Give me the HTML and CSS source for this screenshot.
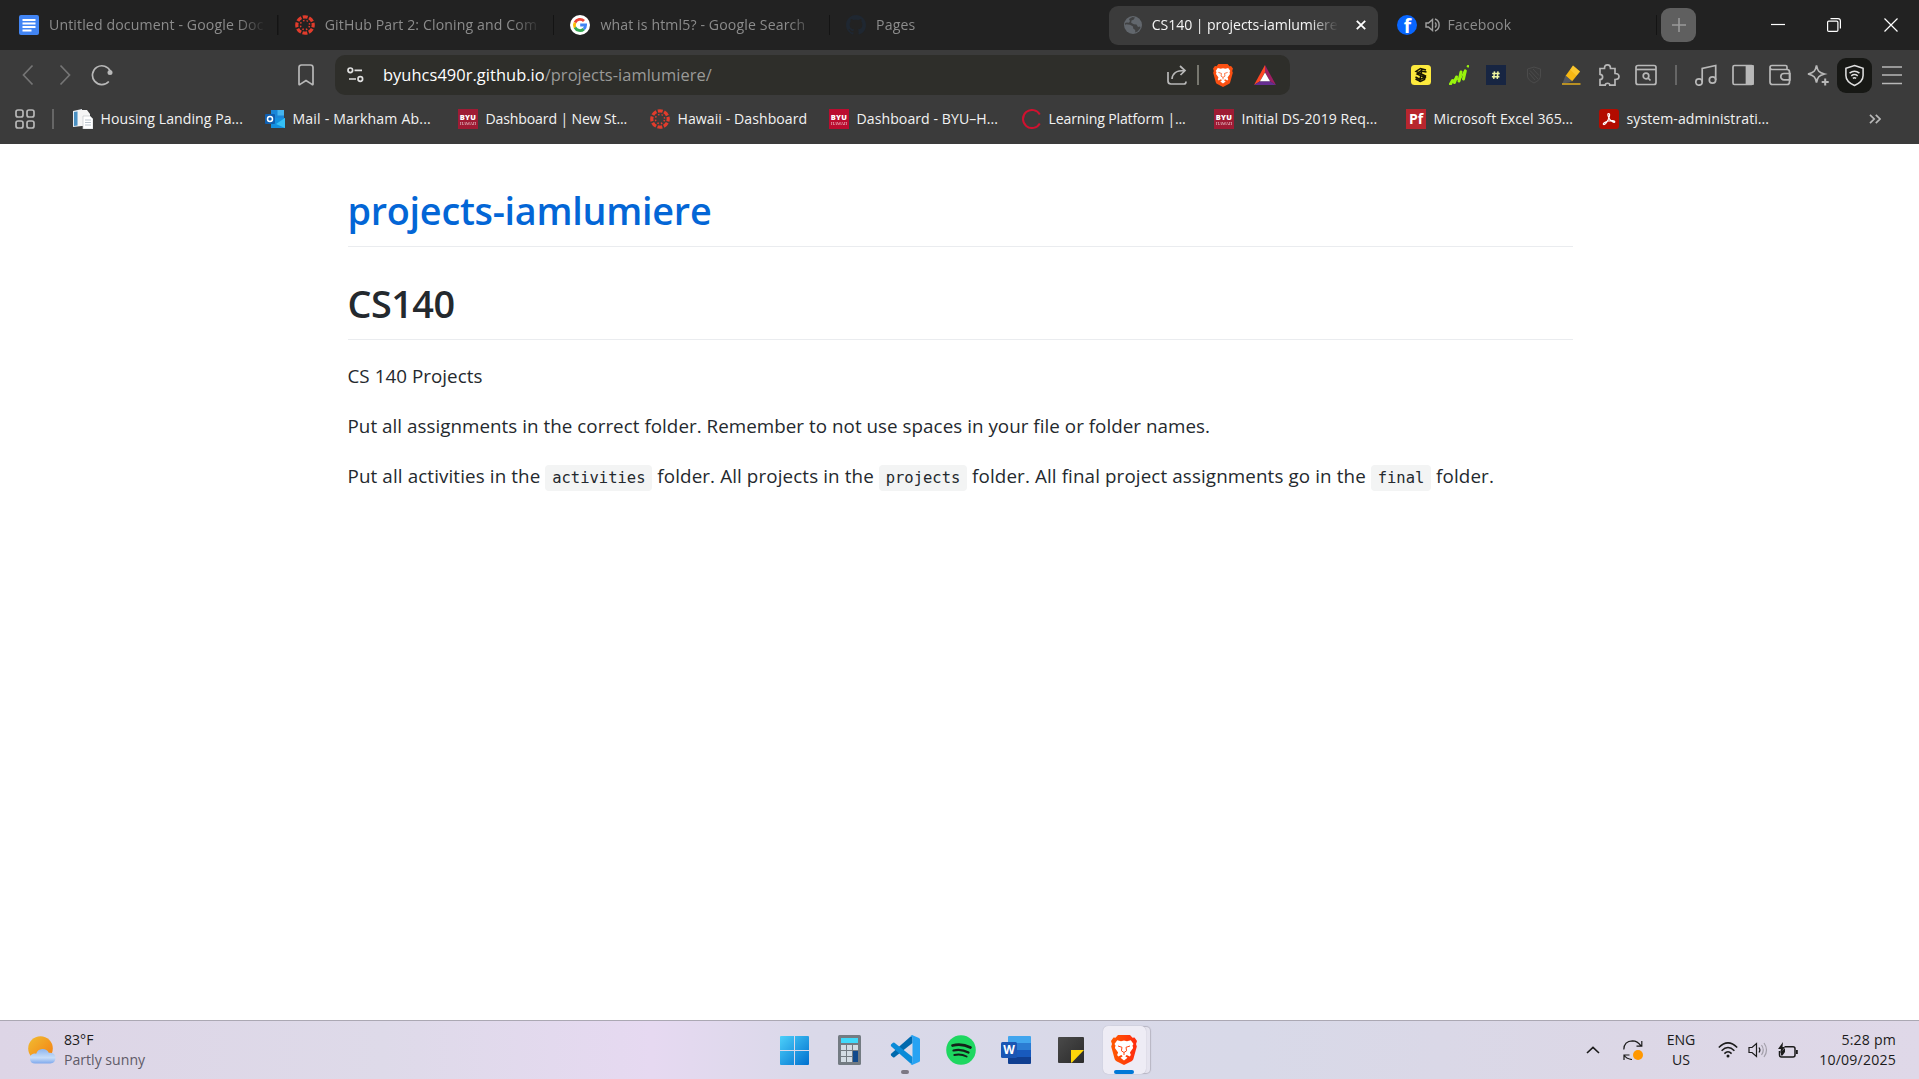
FILE: index.html
```
<!DOCTYPE html>
<html lang="en">
<head>
<meta charset="utf-8">
<title>CS140 | projects-iamlumiere</title>
<link rel="stylesheet" href="styles.css">
</head>
<body>
<svg class="defs" width="0" height="0" aria-hidden="true">
  <defs>
    <linearGradient id="winblue" x1="0" y1="0" x2="1" y2="1"><stop offset="0" stop-color="#4cd0fa"/><stop offset="1" stop-color="#0070cf"/></linearGradient>
    <linearGradient id="sun" x1="0" y1="0" x2="1" y2="1"><stop offset="0" stop-color="#f0bd32"/><stop offset="1" stop-color="#f57c10"/></linearGradient>
    <linearGradient id="cloud" x1="0" y1="0" x2="0" y2="1"><stop offset="0" stop-color="#8fb6ee"/><stop offset=".6" stop-color="#c8def9"/><stop offset="1" stop-color="#7fa8ec"/></linearGradient>
    <linearGradient id="braveg" x1="0" y1="0" x2="1" y2="0"><stop offset="0" stop-color="#ff5a00"/><stop offset="1" stop-color="#ff2a10"/></linearGradient>
    <linearGradient id="note" x1="0" y1="0" x2="1" y2="1"><stop offset="0" stop-color="#4a4a4a"/><stop offset="1" stop-color="#2b2b2b"/></linearGradient>
    <symbol id="canvas" viewBox="0 0 20 20">
      <circle cx="10" cy="10" r="8.2" fill="none" stroke="#e23c2c" stroke-width="3.2" stroke-dasharray="4.9 1.54" stroke-dashoffset="2.45"/>
      <circle cx="10" cy="10" r="4.6" fill="none" stroke="#e23c2c" stroke-width="1.5" stroke-dasharray="1.5 2.11" stroke-dashoffset="-1.05"/>
    </symbol>
    <symbol id="lion" viewBox="0 0 26 30">
      <path d="M7 0h12l2.5 2.8 2-.3L26 6l-1 3 .8 2.500-3.300 12c-.4 1.400-1 2-2 2.700L13 30l-7.500-3.800c-1-.7-1.600-1.300-2-2.700L.2 11.500 1 9 0 6l2.500-3.500 2 .3z"/>
      <path fill="#fff" d="M13 5.500l3 .7 3.800-.9 2.700 3.700-1 1.500.6 2.500-3.200 4.500 1 2.500-1.200 1.500-3-1.500-1.400 1.300 2.200 1.500L13 25.500l-3.500-2.700 2.200-1.500-1.400-1.300-3 1.500L6.100 20l1-2.500L3.900 13l.6-2.500-1-1.500 2.700-3.700 3.800.9z"/>
      <path fill="none" stroke="currentColor" stroke-width="1" d="M7 11l4 1.300-.6 3.500 2.600 1.700 2.600-1.700-.6-3.500 4-1.300M13 17.500v2.500"/>
    </symbol>
  </defs>
</svg>

<header class="browser">
  <div class="tabstrip">
    <div class="tab">
      <svg class="fav" viewBox="0 0 20 20"><rect width="20" height="20" rx="2" fill="#4285f4"/><path d="M3.500 5h13M3.500 8.500h13M3.500 12h13M3.500 15.500h9" stroke="#fff" stroke-width="2"/></svg>
      <span class="title">Untitled document - Google Doc</span>
    </div>
    <div class="tab"><svg class="fav"><use href="#canvas"/></svg><span class="title">GitHub Part 2: Cloning and Com</span></div>
    <div class="tab">
      <svg class="fav" viewBox="0 0 20 20"><circle cx="10" cy="10" r="10" fill="#fff"/><g fill="none" stroke-width="2.800"><path d="M5 7.500A5.600 5.600 0 0 1 14 6.100" stroke="#ea4335"/><path d="M5 12.500A5.600 5.600 0 0 1 5 7.500" stroke="#fbbc05"/><path d="M13.800 14.100A5.600 5.600 0 0 1 5 12.500" stroke="#34a853"/><path d="M10.200 10h5.400A5.600 5.600 0 0 1 13.800 14.100" stroke="#4285f4"/></g></svg>
      <span class="title">what is html5? - Google Search</span>
    </div>
    <div class="tab">
      <svg class="fav" viewBox="0 0 16 16"><path fill="#1f2731" d="M8 0C3.580 0 0 3.580 0 8c0 3.540 2.290 6.530 5.470 7.590.4.070.55-.17.550-.38 0-.19-.01-.82-.01-1.490-2.010.37-2.530-.49-2.690-.94-.09-.23-.48-.94-.82-1.130-.28-.15-.68-.52-.01-.53.63-.01 1.080.58 1.230.82.720 1.210 1.870.87 2.330.66.070-.52.280-.87.510-1.070-1.780-.2-3.640-.89-3.640-3.950 0-.87.310-1.590.82-2.150-.08-.2-.36-1.020.080-2.120 0 0 .67-.21 2.200.82.640-.18 1.320-.27 2-.27s1.360.090 2 .27c1.530-1.040 2.200-.82 2.200-.82.440 1.100.160 1.920.080 2.120.510.56.820 1.270.820 2.150 0 3.070-1.870 3.750-3.650 3.950.29.250.54.730.54 1.480 0 1.070-.01 1.930-.01 2.200 0 .21.150.46.550.38A8.010 8.010 0 0 0 16 8c0-4.420-3.580-8-8-8z"/></svg>
      <span class="title">Pages</span>
    </div>
    <div class="tab active">
      <svg class="fav" viewBox="0 0 20 20"><circle cx="10" cy="10" r="9" fill="#62676d"/><path fill="#3b3b3b" d="M12 2.500l-1.500 2.300-2 .7-.3 2.200 2.600 1.500 2.700.3 1.500 2.500 2-.5.500 1.500-3 3.500-2.300 1v-2.500l-2-1.500-.2-2L7 9.800l-4-.5-.8 1L2 8l2-.5 2 .3 1-1.800-1-2L9.500 2z" opacity=".85"/></svg>
      <span class="title">CS140 | projects-iamlumiere</span>
      <svg class="tab-close" viewBox="0 0 10 10"><path d="M.8.8l8.400 8.400M9.200.8L.8 9.200" stroke="#fff" stroke-width="1.800"/></svg>
    </div>
    <div class="tab">
      <span class="fav fb">f</span>
      <svg class="speaker" viewBox="0 0 16 14" fill="none" stroke="#a0a0a0" stroke-width="1.400"><path d="M1 5h2.500L7.500 1.500v11L3.500 9H1z"/><path d="M10 4.500c1.500 1.200 1.500 3.800 0 5M10 1c5.500 2 5.500 10 0 12"/></svg>
      <span class="title">Facebook</span>
    </div>
    <div class="newtab"><svg width="14" height="14" viewBox="0 0 14 14"><path d="M7 0v14M0 7h14" stroke="#9a9a9a" stroke-width="1.600"/></svg></div>
    <div class="window-buttons">
      <svg width="14" height="14" viewBox="0 0 14 14"><path d="M0 6.500h14" stroke="#fff" stroke-width="1.200"/></svg>
      <svg width="14" height="14" viewBox="0 0 14 14" fill="none" stroke="#fff" stroke-width="1.200"><rect x=".6" y="3.100" width="10.300" height="10.300" rx="1.200"/><path d="M3.500 .7h7.500q2.400 0 2.400 2.400v7.500"/></svg>
      <svg width="14" height="14" viewBox="0 0 14 14"><path d="M.5.5l13 13M13.500.5l-13 13" stroke="#fff" stroke-width="1.200"/></svg>
    </div>
  </div>

  <div class="toolbar">
    <div class="nav">
      <svg viewBox="0 0 22 22"><path d="M15.500 1.500L6.500 11l9 9.500" stroke="#757575"/></svg>
      <svg viewBox="0 0 22 22"><path d="M6.500 1.500l9 9.500-9 9.500" stroke="#757575"/></svg>
      <svg viewBox="0 0 22 22"><path d="M17.800 17.500A9.400 9.400 0 1 1 19.500 7.500"/><circle cx="19" cy="8.500" r="2.500" fill="#b8b8b8" stroke="none"/></svg>
    </div>
    <svg class="bookmark" viewBox="0 0 16 22"><path d="M1 3.500Q1 1 3.500 1h9Q15 1 15 3.500V20q0 1-1 .4L8 16.500l-6 3.900q-1 .6-1-.4z"/></svg>
    <div class="urlbar">
      <svg class="tune" viewBox="0 0 17 16"><g fill="none" stroke="#e0e0e0" stroke-width="1.700"><circle cx="3.300" cy="3.300" r="2.300"/><path d="M7.500 3.300H15M2 12h7"/><circle cx="13.300" cy="12" r="2.300"/></g></svg>
      <div class="url"><span class="host">byuhcs490r.github.io</span><span class="path">/projects-iamlumiere/</span></div>
      <svg class="share" viewBox="0 0 20 20"><path d="M1 7v9q0 3 3 3h13q2 0 2-2.500M5 14C5.500 8 9 5.500 17.500 5.500M13 1l5 4.500L13.500 10"/></svg>
      <i class="sep"></i>
      <svg class="shield" viewBox="0 0 26 30" fill="#fb5012" color="#fb5012"><use href="#lion"/></svg>
      <svg class="bat" viewBox="0 0 22 20"><path d="M11 0L0 20l6-3.800L11 7z" fill="#ff4724"/><path d="M11 0l11 20-6-3.800L11 7z" fill="#9e1f63"/><path d="M0 20h22l-6-3.800H6z" fill="#662d91"/><path d="M11 7.500l5 8.700H6z" fill="#fff"/></svg>
    </div>
    <div class="extensions">
      <svg viewBox="0 0 20 20"><rect width="20" height="20" rx="3.500" fill="#fdea3d"/><path d="M15 5L9.500 3.500 5 6.500l9.500 4.500-1 3.500-4 2-5-2.500M15.500 7l-6-1L6 9l8 3.500-5 2-4.500-2.500M11 3.500L8.500 17" stroke="#171400" stroke-width="1.500" fill="none"/></svg>
      <svg viewBox="0 0 20 20" stroke="#98f40c" stroke-linecap="round" fill="none"><path d="M1.500 19l2-3.500M5.500 17.500l2-5.500M10 16l2-9M14.500 14l1.800-8" stroke-width="3"/><path d="M19 1.200v.1" stroke-width="2.500"/><path d="M1 19l6-6 3.500 2.500L16 5" stroke-width="1.400"/></svg>
      <svg viewBox="0 0 20 20"><rect width="20" height="20" fill="#172542"/><path d="M8.500 6.300l-.8 7.500M12 6.300l-.8 7.500M6.200 8.500h7.500M5.900 11.700h7.500" stroke="#eef4a0" stroke-width="1.500"/></svg>
      <svg viewBox="0 0 20 20" fill="none" stroke="#4b4b4b"><path d="M10 2l6.500 2v7q0 4-6.500 7-6.500-3-6.500-7V4z"/><path d="M6 5.500l8 8.500M9 4l6 6.500M5 8l6 7"/></svg>
      <svg viewBox="0 0 20 20"><path d="M12 .5l7 6-8 10-6.500-5.500z" fill="#f6b813"/><path d="M12 .5l7 6-3.500 4.300-6.300-6z" fill="#ffd54a" opacity=".5"/><path d="M4.500 10.500l6.500 5.500-3 1.500-6.500 1z" fill="#55585e"/><path d="M1 19h18.500" stroke="#efb61a" stroke-width="1.400"/></svg>
      <svg class="line" viewBox="0 0 22 22"><path d="M2 4.500h4.500C6.500 2 7.500.9 9.500.9s3 1.100 3 3.600H17v5c3 0 4 1 4 3s-1 3-4 3v5.600h-5.200c0-2.500-4.600-2.500-4.600 0H2v-5.500c3.500-.3 3.500-5 0-5.300z"/></svg>
      <svg class="line" viewBox="0 0 22 22"><rect x="1" y="1.500" width="20" height="19" rx="2"/><path d="M1 5.500h20"/><circle cx="11" cy="12" r="2.800"/><path d="M13 14l2.500 2.500"/></svg>
      <i class="sep dim"></i>
      <svg class="line" viewBox="0 0 22 22"><circle cx="4" cy="18" r="3.200"/><circle cx="17.500" cy="16" r="3.200"/><path d="M7.200 18V4.500l13.500-3V16"/></svg>
      <svg class="line" viewBox="0 0 22 22"><rect x="1" y="1.500" width="20" height="19" rx="1.500"/><path d="M14.500 2h6.500v18h-6.500z" fill="#b8b8b8"/></svg>
      <svg class="line" viewBox="0 0 22 22"><path d="M18 5.500V3q0-1.500-1.500-1.500H3Q1 1.500 1 3.500V18q0 2.500 2.500 2.500H18q2.500 0 2.500-2.500V8q0-2.500-2.500-2.500H3q-2 0-2-2M21 9.500h-6a3.200 3.200 0 0 0 0 6.400h6z"/></svg>
      <svg class="line" viewBox="0 0 22 22"><path d="M9.500 1.500c1 5.500 2.500 7 8 8.500-5.500 1.500-7 3-8 8.500-1-5.500-2.500-7-8.500-8.500 6-1.500 7.500-3 8.500-8.500z"/><path d="M18.200 14.500v7M14.700 18h7" stroke-width="2"/></svg>
      <span class="vpn"><svg viewBox="0 0 22 24"><path d="M11 1.500l9 3V12q0 6.500-9 10.500Q2 18.500 2 12V4.500z"/><path d="M5.800 9.500q5.200-4 10.400 0M7.600 12.300q3.400-2.600 6.800 0M9.300 15q1.700-1.300 3.400 0"/></svg></span>
      <svg class="line" viewBox="0 0 22 22"><path d="M1 3h20M1 11h20M1 19.500h20"/></svg>
    </div>
  </div>

  <div class="bookmarks">
    <svg class="grid-icon" viewBox="0 0 20 20"><rect x="1" y="1" width="7" height="7" rx="2"/><rect x="12" y="1" width="7" height="7" rx="2"/><rect x="1" y="12" width="7" height="7" rx="2"/><rect x="12" y="12" width="7" height="7" rx="2"/></svg>
    <i class="sep dim"></i>
    <a><svg class="fav" viewBox="0 0 20 20"><path d="M0 2l9-2v17l-9 1z" fill="#e8eef4"/><path d="M1 3l3.500-.6v14L1 17z" fill="#4a90c2"/><path d="M5 1h9l3 4v12H5z" fill="#f5f5f5"/><path d="M10 7h7l3 3v10H10z" fill="#fff" stroke="#c4c8cc" stroke-width=".7"/><path d="M12 11h6M12 13.500h6M12 16h6" stroke="#b9c3cc"/></svg><span>Housing Landing Pa...</span></a>
    <a class="wide"><svg class="fav" viewBox="0 0 20 20"><path d="M6 1h13v11H6z" fill="#1a86d8"/><path d="M12.500 1H19v5.500h-6.500z" fill="#45b4ee"/><path d="M6 9l14 0v10H6z" fill="#1490df"/><path d="M20 9l-9 6 9 4z" fill="#35c0f5"/><rect y="5" width="10" height="10" rx="1" fill="#0f5fb0"/><circle cx="5" cy="10" r="2.500" fill="none" stroke="#fff" stroke-width="1.500"/></svg><span>Mail - Markham Ab...</span></a>
    <a class="narrow"><span class="fav byu muted">BYU<small>HAWAII</small></span><span>Dashboard | New St...</span></a>
    <a><svg class="fav"><use href="#canvas"/></svg><span>Hawaii - Dashboard</span></a>
    <a><span class="fav byu">BYU<small>HAWAII</small></span><span>Dashboard - BYU–H...</span></a>
    <a class="narrow"><svg class="fav" viewBox="0 0 20 20"><path d="M18.800 5.500A9 9 0 1 0 18.800 14.500" fill="none" stroke="#d0112f" stroke-width="2"/></svg><span>Learning Platform |...</span></a>
    <a><span class="fav byu muted">BYU<small>HAWAII</small></span><span>Initial DS-2019 Req...</span></a>
    <a><span class="fav pf">Pf</span><span>Microsoft Excel 365...</span></a>
    <a><svg class="fav" viewBox="0 0 20 20"><rect width="20" height="20" rx="3" fill="#b30b00"/><path d="M9.500 4.500c2 0 .8 3.500-.3 6-1.200 2.500-3.200 5.300-4.500 5-1.500-.5 1.500-2.900 4.600-3.500 3-.7 6.700-.6 6.500.9-.3 1.400-4-.6-5.400-3C9 7.500 8.300 4.500 9.500 4.500z" fill="none" stroke="#fff" stroke-width="1.200"/></svg><span>system-administrati...</span></a>
    <svg class="more" viewBox="0 0 12 10"><path d="M1 .8L5.200 5 1 9.200M6.800.8L11 5 6.800 9.200"/></svg>
  </div>
</header>

<main class="page">
  <h1><a>projects-iamlumiere</a></h1>
  <h1>CS140</h1>
  <p>CS 140 Projects</p>
  <p>Put all assignments in the correct folder. Remember to not use spaces in your file or folder names.</p>
  <p class="folders">Put all activities in the <code>activities</code> folder. All projects in the <code>projects</code> folder. All final project assignments go in the <code>final</code> folder.</p>
</main>

<footer class="taskbar">
  <div class="weather">
    <svg width="28" height="28" viewBox="0 0 28 28"><circle cx="12.500" cy="12.500" r="12.300" fill="url(#sun)"/><path d="M7 27.500a5 5 0 0 1-1-9.900q1.200-.3 2.200.1a6.900 6.900 0 0 1 12.600-1q6.500-.4 6.700 5.400-.2 5.300-5.200 5.400z" fill="url(#cloud)"/></svg>
    <div><b>83°F</b><span>Partly sunny</span></div>
  </div>
  <div class="apps">
    <div><svg width="29" height="29" viewBox="0 0 29 29" fill="url(#winblue)"><path d="M1 0h13v14H0V1q0-1 1-1zM15 0h13q1 0 1 1v13H15zM0 15h14v14H1q-1 0-1-1zM15 15h14v13q0 1-1 1H15z"/></svg></div>
    <div><svg width="23" height="30" viewBox="0 0 23 30"><rect width="23" height="30" rx="1.500" fill="#737b82"/><rect x="3" y="3" width="17" height="5" fill="#40d9fa"/><g fill="#d3dce4"><path d="M3 10h5v5H3zM9 10h5v5H9zM15 10h5v5h-5zM3 16h5v5H3zM9 16h5v5H9zM3 22h5v5H3zM9 22h5v5H9z"/></g><path d="M15 16h5v11h-5z" fill="#124a8c"/></svg></div>
    <div class="open"><svg width="30" height="30" viewBox="0 0 30 30"><path d="M1 20.500l2 1.700q.8.400 1.500 0L22.500 8V.5L20 2 .8 19z" fill="#0069ad"/><path d="M1 9.500l2-1.700q.8-.4 1.500 0L22.500 22v7.500L20 28 .8 11z" fill="#0a8bd8"/><path d="M22 0l7 3q1 .5 1 1.500v21q0 1-1 1.500l-7 3-1.500-1 2-1.500v-25l-2-1.500z" fill="#27a3f3"/></svg></div>
    <div><svg width="30" height="30" viewBox="0 0 30 30" fill="none" stroke="#14221a" stroke-linecap="round"><circle cx="15" cy="15" r="14.800" fill="#1ed760" stroke="none"/><path d="M6.500 10.500q9-2.500 18 2" stroke-width="2.700"/><path d="M7.500 15.500q7.500-2 15 2" stroke-width="2.200"/><path d="M8.300 20q6.500-1.500 12.300 1.500" stroke-width="1.900"/></svg></div>
    <div><svg width="30" height="28" viewBox="0 0 30 28"><path d="M7 1q0-1 1-1h21q1 0 1 1v6H7z" fill="#41a5ee"/><path d="M7 7h23v7H7z" fill="#2b7cd3"/><path d="M7 14h23v7H7z" fill="#185abd"/><path d="M7 21h23v6q0 1-1 1H8q-1 0-1-1z" fill="#103f91"/><rect y="6" width="16" height="16" rx="1.500" fill="#1a56b4"/><text x="8" y="18" text-anchor="middle" class="word-letter">W</text></svg></div>
    <div><svg width="26" height="26" viewBox="0 0 26 26"><rect width="26" height="26" rx="1" fill="url(#note)"/><path d="M13 13h13L14 25.500q-1 .5-1-.5z" fill="#ffd60a"/></svg></div>
    <div class="current"><svg width="26" height="30" viewBox="0 0 26 30" fill="url(#braveg)" color="#ff4412"><use href="#lion"/></svg></div>
  </div>
  <div class="tray">
    <svg width="14" height="8" viewBox="0 0 14 8"><path d="M1 7l6-5.700L13 7" stroke-width="1.600"/></svg>
    <svg width="20" height="20" viewBox="0 0 20 20"><path d="M.8 9.500Q1 1 9.500.8q5 0 8.500 5M18.800 1v5.200h-5.300M1 20v-5h5.500M1 15q2.500 4 8 4.500" stroke-width="1.200"/><circle cx="15" cy="15" r="5" fill="#ff9800" stroke="none"/></svg>
    <div class="lang">ENG<br>US</div>
    <svg width="20" height="16" viewBox="0 0 20 16" stroke-width="1.500"><path d="M.8 5.500q9.200-9.200 18.400 0M3.600 8.700q6.400-6.400 12.800 0M6.400 11.600q3.600-3.600 7.200 0"/><circle cx="10" cy="14" r="1.500" fill="#1b1b1b" stroke="none"/></svg>
    <svg width="20" height="16" viewBox="0 0 20 16" stroke-width="1.200"><path d="M1 5.500h3L8.500 1.500v13L4 10.500H1z"/><path d="M11 5.500q1.800 2.500 0 5"/><path d="M13.500 3q3.500 5 0 10M16 1q5 7 0 14" opacity=".3"/></svg>
    <svg width="20" height="17" viewBox="0 0 20 17"><path d="M6.500 4.700H15q2 0 2 2V13q0 2-2 2H3.500q-2 0-2-2V9" stroke-width="1.500"/><path d="M18 8h1.800v4H18zM5 0L0 7h3L2 11.500 7 5H4.500zM3 13.500V10l4-4v4l-2.500 3.500z" fill="#1b1b1b" stroke="none"/></svg>
    <div class="clock">5:28 pm<br>10/09/2025</div>
  </div>
</footer>
</body>
</html>
```
FILE: styles.css
```
* { box-sizing: border-box; }
body {
  margin: 0;
  width: 1919px;
  height: 1079px;
  display: flex;
  flex-direction: column;
  overflow: hidden;
  background: #fff;
  font-family: "Open Sans", "Noto Sans", sans-serif;
  font-size: 14.1px;
}
svg { display: block; flex: none; }
.defs { position: absolute; }
.fav { width: 20px; height: 20px; flex: none; }

/* Tabs */
.browser { background: #3b3b3b; height: 144px; }
.tabstrip {
  display: grid;
  grid-template-columns: repeat(6, 275.7px) 1fr 170px;
  height: 50px;
  padding-left: 3px;
  background: #222;
  align-items: center;
}
.tab {
  display: flex;
  align-items: center;
  height: 39px;
  padding: 0 13px 0 16px;
  color: #8c8c8c;
  letter-spacing: .13px;
  background: linear-gradient(#141414, #141414) right center / 1.500px 20px no-repeat;
}
.tab .title {
  flex: 1;
  margin-left: 10px;
  padding-bottom: 2px;
  white-space: nowrap;
  mask-image: linear-gradient(to right, #000 calc(100% - 28px), transparent);
}
.tab:has(+ .active) { background: none; }
.tab.active {
  margin: 0 3px;
  padding: 0 15px 0 14px;
  border-radius: 9px;
  background: #3b3b3b;
  color: #f4f4f4;
  letter-spacing: -.08px;
}
.tab.active .title { margin-left: 9px; }
.tab-close { width: 10px; height: 10px; margin: 0 0 0 18px; }
.fb {
  border-radius: 50%;
  background: #0866ff;
  color: #fff;
  font: 700 19px/22px "Open Sans", sans-serif;
  text-align: center;
}
.speaker { width: 16px; height: 14px; margin-left: 8px; }
.tab .speaker + .title { margin-left: 6px; }
.newtab {
  display: grid;
  place-items: center;
  width: 35px;
  height: 34px;
  margin-left: 4px;
  border-radius: 9px;
  background: #5f5f5f;
}
.window-buttons { display: flex; gap: 42.500px; padding-left: 21.500px; }

/* Toolbar */
.toolbar { display: flex; align-items: center; height: 50px; }
.nav { display: flex; gap: 15px; width: 298px; padding-left: 17px; }
.nav svg { width: 22px; height: 22px; }
.nav svg, .bookmark, .share, .line, .vpn svg, .grid-icon, .more {
  fill: none;
  stroke: #b8b8b8;
  stroke-width: 1.700;
}
.bookmark { width: 16px; height: 22px; }
.urlbar {
  display: flex;
  align-items: center;
  width: 955px;
  height: 40px;
  margin-left: 21px;
  padding: 0 14px 0 12px;
  border-radius: 10px;
  background: #2e2e2a;
}
.tune { width: 17px; height: 16px; }
.url { flex: 1; margin-left: 19px; padding-bottom: 2px; font-size: 16.450px; letter-spacing: .04px; }
.host { color: #fff; }
.path { color: #9a9a98; }
.share { width: 20px; height: 20px; }
.sep { display: block; width: 2px; height: 20px; background: #77776f; }
.sep.dim { background: #666; }
.urlbar .sep { margin-left: 10px; }
.shield { width: 20px; height: 23px; margin-left: 14px; }
.bat { width: 22px; height: 20px; margin-left: 21px; }
.extensions {
  display: grid;
  grid-template-columns: repeat(7, 37.500px) 22px repeat(6, 37.300px);
  align-items: center;
  justify-items: center;
  margin-left: 112.500px;
}
.extensions > svg { width: 20px; height: 20px; }
.extensions > svg.line { width: 22px; height: 22px; }
.vpn {
  display: grid;
  place-items: center;
  width: 35px;
  height: 35px;
  border-radius: 9px;
  background: #171815;
}
.vpn svg { width: 21px; height: 23px; stroke: #e0e0e0; stroke-width: 1.600; }

/* Bookmarks */
.bookmarks {
  display: grid;
  grid-template-columns: 37px 21px 192px 193px 192px 179px 192px 193px 192px 193px 1fr 12px;
  align-items: center;
  height: 38px;
  padding: 0 38px 0 15px;
  color: #f2f2f2;
}
.bookmarks a { display: flex; align-items: center; gap: 7.500px; white-space: nowrap; letter-spacing: .06px; }
.bookmarks a > span:last-child { padding-bottom: 2px; }
.bookmarks a.wide { letter-spacing: .17px; }
.bookmarks a.narrow { letter-spacing: -.15px; }
.grid-icon { width: 20px; height: 20px; }
.more { width: 12px; height: 10px; }
.byu {
  display: flex;
  flex-direction: column;
  align-items: center;
  justify-content: center;
  background: #ba0c2f;
  color: #fff;
  font: 800 7.500px/8px "Open Sans", sans-serif;
  letter-spacing: .2px;
}
.byu small { font: 4.500px/5px "Liberation Serif", serif; letter-spacing: 0; opacity: .8; }
.byu.muted { background: #9e1b34; }
.pf { background: #b8262e; font: 700 14px/20px "Open Sans", sans-serif; text-align: center; color: #fff; letter-spacing: 0; }

/* Page content */
.page { flex: 1; width: 1225px; margin-left: 347.500px; padding-top: 40px; color: #24292e; }
.page h1 {
  height: 63px;
  margin: 0 0 30px;
  padding-top: 2px;
  border-bottom: 1px solid #eaecef;
  font-size: 37.800px;
  line-height: 50px;
  font-weight: 600;
  letter-spacing: -.27px;
}
.page h1 + h1 { margin-bottom: 21px; letter-spacing: -.5px; }
.page h1 a { color: #0366d6; }
.page p { margin: 0 0 20px; font-size: 18.800px; line-height: 30px; letter-spacing: .04px; white-space: nowrap; }
.page p.folders { letter-spacing: .12px; }
code {
  padding: 4.300px 6.800px 3.600px;
  border-radius: 4px;
  background: #f3f4f4;
  font: 15.500px "DejaVu Sans Mono", monospace;
  letter-spacing: 0;
}

/* Taskbar */
.taskbar {
  display: grid;
  grid-template-columns: 767px 387px 1fr;
  align-items: center;
  height: 59px;
  border-top: 1px solid #aba8b3;
  background: linear-gradient(90deg, #ddd5e6 0, #dedae9 20%, #e6d9f1 34%, #dad9e9 42%, #d8d9e8 65%, #dcd7e6 85%, #dfd8e8 100%);
  color: #1b1b1b;
}
.weather { display: flex; align-items: center; gap: 8px; padding-left: 28px; line-height: 20px; }
.weather b, .weather span { display: block; font-weight: 400; }
.weather span { color: #5f5b68; }
.apps { display: grid; grid-template-columns: repeat(7, 55.300px); height: 48px; }
.apps > div { display: grid; place-items: center; position: relative; }
.word-letter { font: 700 12px "Open Sans", sans-serif; fill: #fff; }
.open::after, .current::after {
  content: "";
  position: absolute;
  bottom: 0;
  left: calc(50% - 4px);
  width: 8px;
  height: 4px;
  border-radius: 2px;
  background: #7b7884;
}
.apps > .current {
  width: 43px;
  margin-left: 4px;
  border-radius: 5px;
  background: #eeecf5;
  box-shadow: 0 0 1px #aaa8b6, 5px 0 0 -1px #e6e4ef, 5px 0 1px 0 #b7b5c3;
}
.current::after { left: calc(50% - 10px); width: 20px; background: #0078d7; }
.tray {
  display: grid;
  grid-template-columns: 40px 40px 56px 38px 22px 38px 89px;
  align-items: center;
  justify-items: center;
  justify-content: end;
  padding-right: 23px;
  line-height: 20px;
}
.tray > svg { fill: none; stroke: #1b1b1b; }
.lang { text-align: center; }
.clock { justify-self: end; text-align: right; letter-spacing: .2px; white-space: nowrap; }
```
